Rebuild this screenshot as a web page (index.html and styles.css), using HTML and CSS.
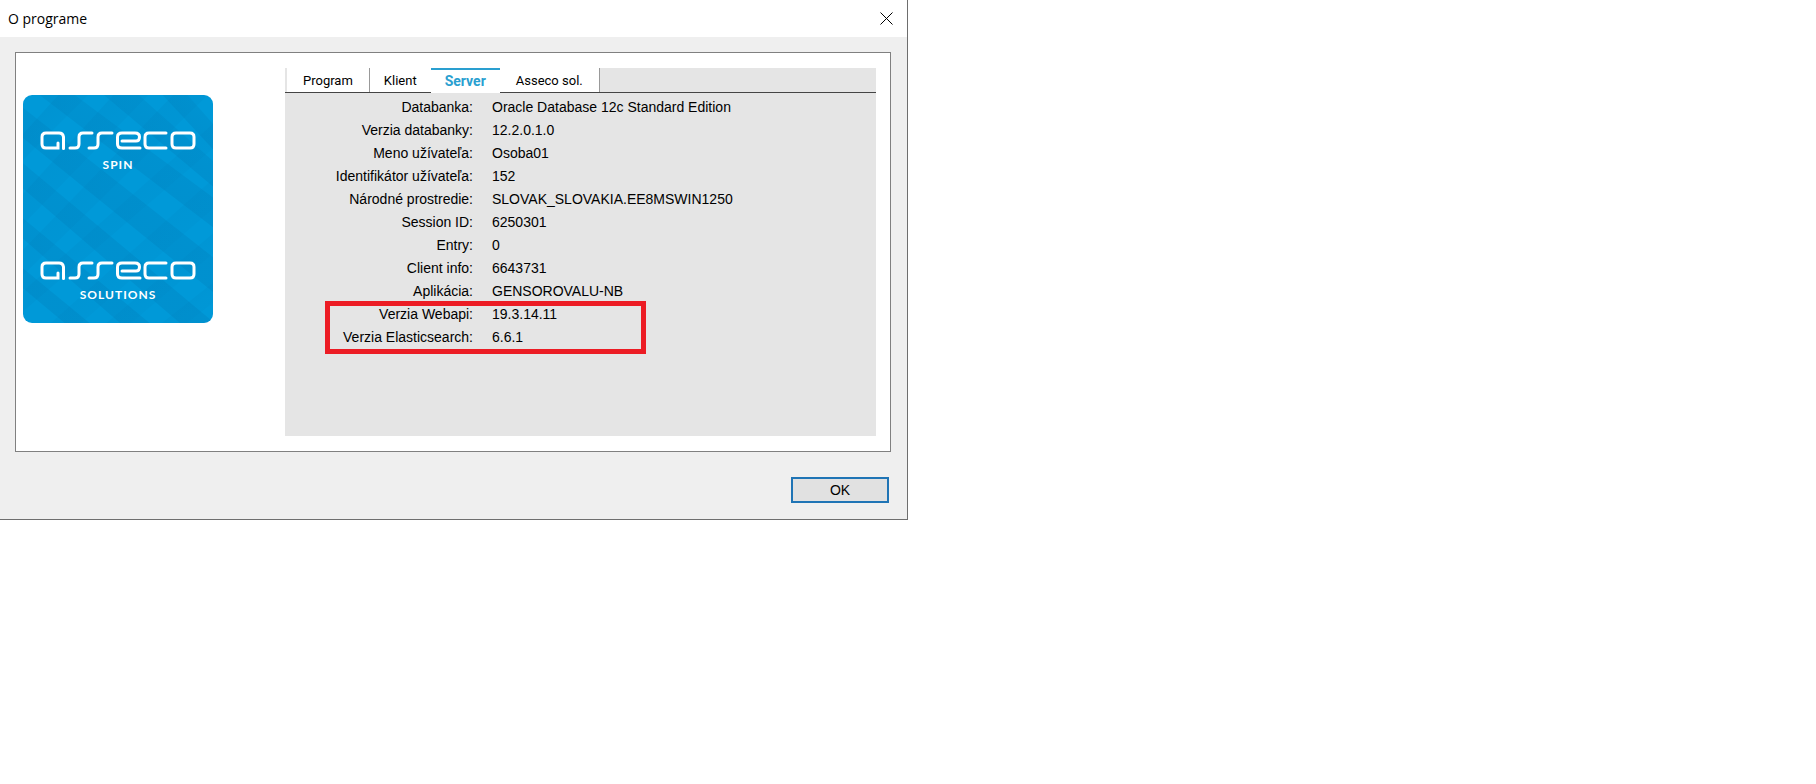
FILE: index.html
```html
<!DOCTYPE html>
<html lang="sk">
<head>
    <meta charset="UTF-8">
    <meta name="viewport" content="width=device-width, initial-scale=1.0">
    <title>O programe</title>
    <link rel="stylesheet" href="styles.css">
</head>
<body>
    <div class="dialog" role="dialog" aria-labelledby="dialogTitle">
        <header class="titlebar">
            <h1 id="dialogTitle">O programe</h1>
            <button type="button" class="close" aria-label="Zavrieť">
                <svg width="13" height="13" viewBox="0 0 13 13"><path d="M.5 .5 12.5 12.5M12.5 .5 .5 12.5"/></svg>
            </button>
        </header>
        <div class="content">
            <div class="panel">
                <div class="brand">
                    <svg class="pattern" viewBox="0 0 190 228" preserveAspectRatio="none" aria-hidden="true">
                        <defs>
                            <linearGradient id="shadeDown" x1="1" y1="0" x2=".6" y2=".6">
                                <stop offset="0" stop-color="#0079b5" stop-opacity=".1"/>
                                <stop offset="1" stop-color="#0079b5" stop-opacity=".26"/>
                            </linearGradient>
                            <linearGradient id="shadeUp" x1="0" y1="0" x2=".6" y2=".6">
                                <stop offset="0" stop-color="#0079b5" stop-opacity=".28"/>
                                <stop offset="1" stop-color="#0079b5" stop-opacity=".08"/>
                            </linearGradient>
                        </defs>
                        <g fill="url(#shadeDown)">
                            <path d="M10-5 45-5 200 110 200 140z"/>
                            <path d="M75-5 110-5 200 75 200 100z"/>
                            <path d="M135-5 160-5 200 40 200 65z"/>
                            <path d="M-10 5-10 35 200 205 200 170z"/>
                            <path d="M-10 60-10 85 165 235 200 235z"/>
                            <path d="M-10 115-10 135 105 235 135 235z"/>
                            <path d="M-10 165-10 185 50 235 75 235z"/>
                        </g>
                        <g fill="url(#shadeUp)">
                            <path d="M40-5 70-5-10 75-10 50z"/>
                            <path d="M95-5 130-5-10 140-10 110z"/>
                            <path d="M155-5 190-5-10 190-10 165z"/>
                            <path d="M200 20 200 45-10 225-10 205z"/>
                            <path d="M200 75 200 105 50 235 20 235z"/>
                            <path d="M200 130 200 150 100 235 75 235z"/>
                            <path d="M200 180 200 200 155 235 130 235z"/>
                        </g>
                    </svg>
                    <div class="logo">
                        <svg class="wordmark" viewBox="0 0 156 19" aria-label="asseco">
                            <path id="asseco" d="M18 12v5H6q-4 0-4-4V6q0-4 4-4h13q4 0 4.500 4v11.500M30 17h5q4 0 4-4V6q0-4 4-4h9M49 17h5q4 0 4-4V6q0-4 4-4h10M82 10h14q3.500 0 3.500-4T95 2H82q-4.500 0-4.500 4v7q0 4 4.500 4h18M126 2h-17q-4 0-4 4v7q0 4 4 4h17M136 2h14q4 0 4 4v7q0 4-4 4h-14q-4 0-4-4V6q0-4 4-4z"/>
                        </svg>
                        <span>SPIN</span>
                    </div>
                    <div class="logo">
                        <svg class="wordmark" viewBox="0 0 156 19" aria-label="asseco"><use href="#asseco"/></svg>
                        <span>SOLUTIONS</span>
                    </div>
                </div>
                <div class="info">
                    <div class="tabs" role="tablist">
                        <button type="button" class="tab" role="tab">Program</button>
                        <button type="button" class="tab" role="tab">Klient</button>
                        <button type="button" class="tab active" role="tab" aria-selected="true">Server</button>
                        <button type="button" class="tab" role="tab">Asseco sol.</button>
                    </div>
                    <div class="details">
                        <dl>
                            <dt>Databanka:</dt><dd>Oracle Database 12c Standard Edition</dd>
                            <dt>Verzia databanky:</dt><dd>12.2.0.1.0</dd>
                            <dt>Meno užívateľa:</dt><dd>Osoba01</dd>
                            <dt>Identifikátor užívateľa:</dt><dd>152</dd>
                            <dt>Národné prostredie:</dt><dd>SLOVAK_SLOVAKIA.EE8MSWIN1250</dd>
                            <dt>Session ID:</dt><dd>6250301</dd>
                            <dt>Entry:</dt><dd>0</dd>
                            <dt>Client info:</dt><dd>6643731</dd>
                            <dt>Aplikácia:</dt><dd>GENSOROVALU-NB</dd>
                            <dt>Verzia Webapi:</dt><dd>19.3.14.11</dd>
                            <dt>Verzia Elasticsearch:</dt><dd>6.6.1</dd>
                        </dl>
                        <div class="highlight"></div>
                    </div>
                </div>
            </div>
            <footer class="actions">
                <button type="button" class="ok">OK</button>
            </footer>
        </div>
    </div>
</body>
</html>
```
FILE: styles.css
```css
* {
    box-sizing: border-box;
}
body {
    margin: 0;
    background: #fff;
    color: #000;
    font-family: "Liberation Sans", Arial, sans-serif;
    font-size: 14px;
}
button {
    font-family: inherit;
    color: inherit;
    border: none;
    padding: 0;
}
.dialog {
    width: 50%;
    min-width: 700px;
    border: solid #6e6e6e;
    border-width: 0 1px 1px 0;
    background: #efefef;
}
.titlebar {
    display: flex;
    justify-content: space-between;
    align-items: center;
    height: 37px;
    padding: 0 14px 0 8px;
    background: #fff;
}
.titlebar h1 {
    margin: 0;
    font: 400 14px "Open Sans", sans-serif;
}
.close {
    display: flex;
    background: none;
}
.close path {
    stroke: #000;
    fill: none;
}
.content {
    padding: 15px 16px 16px 15px;
}
.panel {
    display: flex;
    justify-content: space-between;
    gap: 72px;
    padding: 15px 14px 15px 7px;
    border: 1px solid #808080;
    background: #fff;
}
.brand {
    position: relative;
    display: flex;
    flex: 0 0 190px;
    flex-direction: column;
    justify-content: space-between;
    height: 228px;
    margin-top: 27px;
    padding: 36px 17px 20px;
    border-radius: 9px;
    background: #0099d8;
    overflow: hidden;
}
.pattern {
    position: absolute;
    inset: 0;
    width: 100%;
    height: 100%;
}
.logo {
    position: relative;
    display: flex;
    flex-direction: column;
    align-items: center;
    gap: 7px;
    color: #fff;
    font: 700 12px/16px Lato, sans-serif;
    letter-spacing: 1px;
}
.wordmark {
    width: 100%;
    fill: none;
    stroke: #fff;
    stroke-width: 3;
    stroke-linecap: round;
}
.info {
    flex: 1;
    min-height: 368px;
    background: #e5e5e5;
}
.tabs {
    display: flex;
    height: 25px;
    padding-left: 2px;
    border-bottom: 1px solid #444;
}
.tab {
    padding: 0 16px;
    border-right: 1px solid #999;
    background: #fff;
    font: 400 13px Roboto, sans-serif;
}
.tab:nth-child(2) {
    padding: 0 14px;
    border-right: none;
}
.tab.active {
    height: 25px;
    padding: 0 14px 2px;
    border-top: 2px solid #2a9fd0;
    border-right: none;
    color: #2a9fd0;
    font-size: 14px;
    font-weight: 700;
}
.details {
    position: relative;
    padding-top: 3px;
}
.details dl {
    display: grid;
    grid-template-columns: 188px 1fr;
    column-gap: 19px;
    margin: 0;
    line-height: 23px;
}
.details dt {
    text-align: right;
}
.details dd {
    margin: 0;
}
.highlight {
    position: absolute;
    left: 40px;
    bottom: -5px;
    width: 321px;
    height: 53px;
    border: 5px solid #ec1c24;
}
.actions {
    display: flex;
    justify-content: flex-end;
    padding-top: 25px;
    padding-right: 2px;
}
.ok {
    width: 98px;
    height: 26px;
    border: 2px solid #1f74b5;
    background: #e1e1e1;
    font-size: 14px;
}
```
